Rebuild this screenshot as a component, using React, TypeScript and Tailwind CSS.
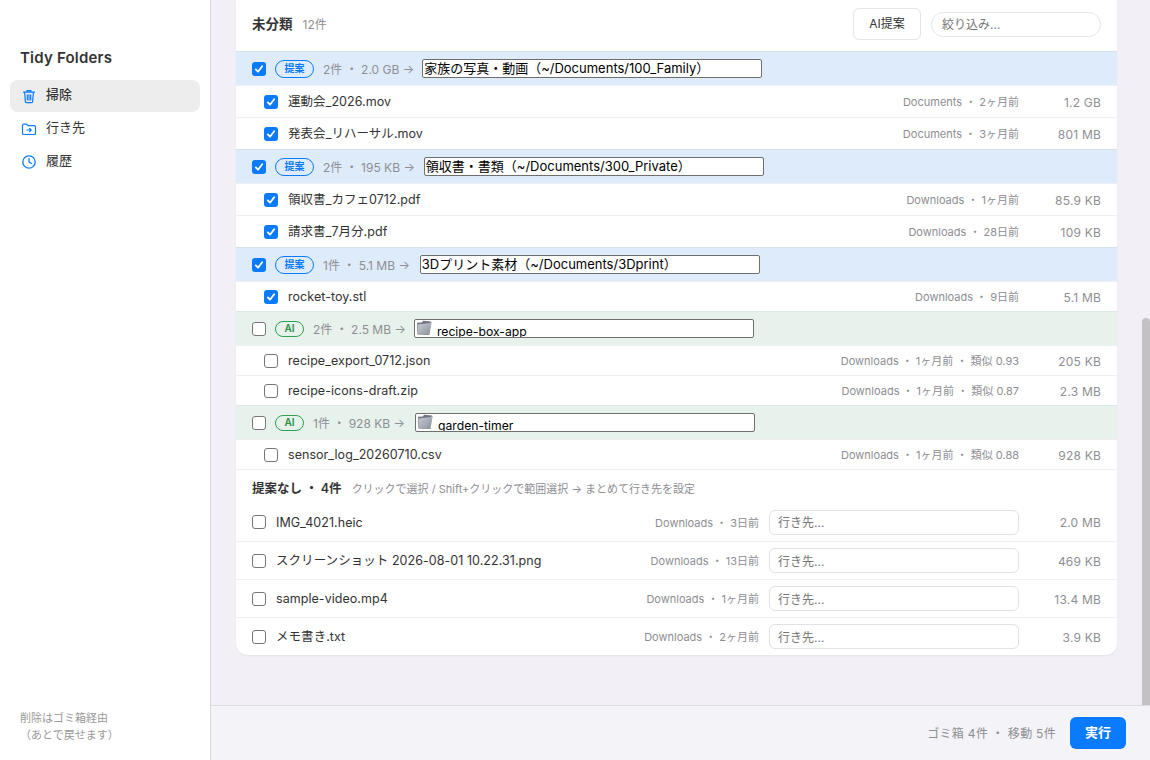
import React from "react";

const font = { fontFamily: 'Inter, "Noto Sans CJK JP", sans-serif' };

function Check({ on }: { on: boolean }) {
  return on ? (
    <span className="flex h-[14px] w-[14px] shrink-0 items-center justify-center rounded-[3px] bg-[#0a7aff]">
      <svg width="10" height="10" viewBox="0 0 10 10" fill="none">
        <path d="M1.8 5.4 4 7.7 8.2 2.2" stroke="#fff" strokeWidth="1.8" strokeLinecap="round" strokeLinejoin="round" />
      </svg>
    </span>
  ) : (
    <span className="h-[14px] w-[14px] shrink-0 rounded-[3px] border border-[#767676] bg-white" />
  );
}

function FolderEmoji() {
  return (
    <svg width="17" height="16" viewBox="0 0 17 16" className="shrink-0">
      <defs>
        <linearGradient id="fg" x1="0" y1="0" x2="1" y2="1">
          <stop offset="0" stopColor="#c9ced6" />
          <stop offset="1" stopColor="#8b919b" />
        </linearGradient>
      </defs>
      <path d="M1 2.8 1.5 14.5 13 15 15 1.5 7 .8 6 2.6Z" fill="#70757d" />
      <path d="M1.5 4.6 13.5 3 15.8 1.6 13.5 14.8 2.2 14.8Z" fill="url(#fg)" />
    </svg>
  );
}

function Group({ kind, on, count, size, name, emoji, ml = "ml-2" }: { kind: string; on: boolean; count: string; size: string; name: string; emoji?: boolean; ml?: string }) {
  const ai = kind === "AI";
  return (
    <div className={`flex h-[34px] items-center border-t pl-4 ${ai ? "border-[#dfe9e3] bg-[#e6f2eb]" : "border-[#d5e1ef] bg-[#deebfb]"}`}>
      <Check on={on} />
      <span className={`ml-[9px] flex items-center justify-center rounded-full border text-[10px] font-semibold ${ai ? "h-4 w-[29px] border-[#30a14e] text-[#28903f]" : "h-[18px] w-[39px] border-[#0a7aff] text-[#0a7aff]"}`}>{kind}</span>
      <span className="ml-[9px] mt-[2px] whitespace-pre text-xs text-[#8e8e93]">{count} ・ {size} →</span>
      <div className={`${ml} flex h-[19px] w-[340px] items-start overflow-hidden rounded-[2px] border border-[#6f6f6f] bg-white pl-[1px] text-[13px] leading-[17px] text-black`}>
        {emoji && <FolderEmoji />}
        <span className={emoji ? "ml-1 mt-[3px] whitespace-nowrap text-[12.2px]" : "whitespace-nowrap"}>{name}</span>
      </div>
    </div>
  );
}

function FileRow({ name, meta, size, on, h }: { name: string; meta: string; size: string; on: boolean; h: string }) {
  return (
    <div className={`flex items-center border-t border-[#f0f0f2] pl-7 pr-4 ${h}`}>
      <Check on={on} />
      <span className="ml-[10px] mt-[2px] flex-1 whitespace-nowrap text-[12.5px] tracking-[0.05px] text-[#333]">{name}</span>
      <span className="mt-[2px] whitespace-pre text-[11px] text-[#8e8e93]">{meta}</span>
      <span className="mt-[2px] w-[82px] text-right text-xs tracking-[0.2px] text-[#8e8e93]">{size}</span>
    </div>
  );
}

function PlainRow({ name, meta, size }: { name: string; meta: string; size: string }) {
  return (
    <div className="flex h-[38px] items-center border-t border-[#f0f0f2] pl-4 pr-4 first:border-t-0">
      <Check on={false} />
      <span className="ml-[10px] mt-[2px] flex-1 whitespace-nowrap text-[12.5px] tracking-[0.05px] text-[#333]">{name}</span>
      <span className="mt-[2px] whitespace-pre text-[11px] text-[#8e8e93]">{meta}</span>
      <div className="ml-[10px] flex h-[25px] w-[250px] items-center rounded-md border border-[#e2e2e5] bg-white pl-2 pt-[2px] text-xs text-[#757575]">行き先...</div>
      <span className="mt-[2px] w-[82px] text-right text-xs tracking-[0.2px] text-[#8e8e93]">{size}</span>
    </div>
  );
}

export default function App() {
  return (
    <div className="flex h-[760px] w-[1150px] overflow-hidden bg-[#f2f0f6]" style={font}>
      <aside className="flex w-[211px] shrink-0 flex-col border-r border-[#d9d9de] bg-white px-[10px] pt-[48px] pb-4">
        <h1 className="px-[10px] text-[15px] leading-[19px] font-semibold tracking-[0.2px] text-[#333]">Tidy Folders</h1>
        <nav className="mt-[13px] flex flex-col gap-[1px] text-[13px] text-[#333]">
          <div className="flex h-8 items-center gap-[9px] rounded-lg bg-[#ededed] pl-[11px] font-medium">
            <svg width="16" height="16" viewBox="0 0 16 16" fill="none" stroke="#0a7aff" strokeWidth="1.2" strokeLinecap="round" strokeLinejoin="round">
              <path d="M2.5 4.2h11M6 4V2.6h4V4M3.6 4.4l.8 9.4c0 .5.4.8.9.8h5.4c.5 0 .9-.3.9-.8l.8-9.4M6.3 6.8v5.2M8 6.8v5.2M9.7 6.8v5.2" />
            </svg>
            <span className="-mt-[2px]">掃除</span>
          </div>
          <div className="flex h-8 items-center gap-[9px] pl-[11px]">
            <svg width="16" height="16" viewBox="0 0 16 16" fill="none" stroke="#0a7aff" strokeWidth="1.2" strokeLinecap="round" strokeLinejoin="round">
              <path d="M1.5 4.5c0-.8.5-1.3 1.3-1.3h2.8l1.4 1.5h6.2c.8 0 1.3.5 1.3 1.3v6.2c0 .8-.5 1.3-1.3 1.3H2.8c-.8 0-1.3-.5-1.3-1.3Z" />
              <path d="M5.8 9h4.2M8.6 7.4 10.2 9l-1.6 1.6" />
            </svg>
            <span className="-mt-[2px]">行き先</span>
          </div>
          <div className="flex h-8 items-center gap-[9px] pl-[11px]">
            <svg width="16" height="16" viewBox="0 0 16 16" fill="none" stroke="#0a7aff" strokeWidth="1.3" strokeLinecap="round" strokeLinejoin="round">
              <circle cx="8" cy="8" r="6.2" />
              <path d="M8 4.3V8l2.4 1.5" />
            </svg>
            <span className="-mt-[2px]">履歴</span>
          </div>
        </nav>
        <p className="mt-auto px-[10px] text-[11px] leading-[17px] text-[#999]">
          削除はゴミ箱経由
          <br />
          （あとで戻せます）
        </p>
      </aside>

      <div className="flex min-w-0 flex-1 flex-col">
        <div className="flex min-h-0 flex-1">
          <main className="min-w-0 flex-1 pl-[25px] pr-[25px]">
            <section className="overflow-hidden rounded-b-xl bg-white shadow-[0_1px_2px_rgba(0,0,0,0.05)]">
              <header className="flex h-[51px] items-center pb-[3px] pl-4 pr-4">
                <span className="text-[13.5px] font-semibold text-[#333]">未分類</span>
                <span className="ml-[10px] mt-[2px] text-xs text-[#8e8e93]">12件</span>
                <button className="ml-auto flex h-8 w-[68px] items-center justify-center rounded-md border border-[#e5e5e8] bg-white text-xs text-[#333]">AI提案</button>
                <div className="ml-[10px] flex h-[25px] w-[170px] items-center rounded-full border border-[#e5e5e8] pl-[10px] pt-[2px] text-xs text-[#757575]">絞り込み...</div>
              </header>

              <Group kind="提案" on count="2件" size="2.0 GB" name="家族の写真・動画（~/Documents/100_Family）" />
              <FileRow on h="h-8" name="運動会_2026.mov" meta="Documents ・ 2ヶ月前" size="1.2 GB" />
              <FileRow on h="h-8" name="発表会_リハーサル.mov" meta="Documents ・ 3ヶ月前" size="801 MB" />
              <Group kind="提案" on ml="ml-[9px]" count="2件" size="195 KB" name="領収書・書類（~/Documents/300_Private）" />
              <FileRow on h="h-8" name="領収書_カフェ0712.pdf" meta="Downloads ・ 1ヶ月前" size="85.9 KB" />
              <FileRow on h="h-8" name="請求書_7月分.pdf" meta="Downloads ・ 28日前" size="109 KB" />
              <Group kind="提案" on ml="ml-[10px]" count="1件" size="5.1 MB" name="3Dプリント素材（~/Documents/3Dprint）" />
              <FileRow on h="h-[30px]" name="rocket-toy.stl" meta="Downloads ・ 9日前" size="5.1 MB" />
              <Group kind="AI" on={false} count="2件" size="2.5 MB" name="recipe-box-app" emoji />
              <FileRow on={false} h="h-[30px]" name="recipe_export_0712.json" meta="Downloads ・ 1ヶ月前 ・ 類似 0.93" size="205 KB" />
              <FileRow on={false} h="h-[30px]" name="recipe-icons-draft.zip" meta="Downloads ・ 1ヶ月前 ・ 類似 0.87" size="2.3 MB" />
              <Group kind="AI" on={false} ml="ml-[10px]" count="1件" size="928 KB" name="garden-timer" emoji />
              <FileRow on={false} h="h-[30px]" name="sensor_log_20260710.csv" meta="Downloads ・ 1ヶ月前 ・ 類似 0.88" size="928 KB" />

              <div className="flex h-[34px] items-center gap-[10px] border-t border-[#f0f0f2] pl-4 pt-[6px]">
                <span className="whitespace-pre text-[12.5px] font-semibold text-[#333]">提案なし ・ 4件</span>
                <span className="text-[11px] text-[#8e8e93]">クリックで選択 / Shift+クリックで範囲選択 → まとめて行き先を設定</span>
              </div>
              <div>
                <PlainRow name="IMG_4021.heic" meta="Downloads ・ 3日前" size="2.0 MB" />
                <PlainRow name="スクリーンショット 2026-08-01 10.22.31.png" meta="Downloads ・ 13日前" size="469 KB" />
                <PlainRow name="sample-video.mp4" meta="Downloads ・ 1ヶ月前" size="13.4 MB" />
                <PlainRow name="メモ書き.txt" meta="Downloads ・ 2ヶ月前" size="3.9 KB" />
              </div>
            </section>
          </main>
          <div className="flex w-2 shrink-0 flex-col">
            <div className="h-[318px] shrink-0" />
            <div className="flex-1 rounded-t-[4px] bg-[#c2c2c4]" />
          </div>
        </div>
        <footer className="flex h-[55px] shrink-0 items-center justify-end border-t border-[#dcdce0] bg-[#f4f3f7] pr-6">
          <span className="mt-[2px] whitespace-pre text-xs tracking-[0.3px] text-[#8e8e93]">ゴミ箱 4件 ・ 移動 5件</span>
          <button className="ml-[14px] flex h-8 w-[56px] items-center justify-center rounded-md bg-[#0a7aff] text-[13px] font-semibold text-white">実行</button>
        </footer>
      </div>
    </div>
  );
}
